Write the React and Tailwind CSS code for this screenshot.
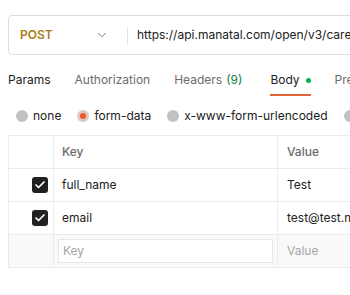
import { ChevronDown, Check } from 'lucide-react';

const tabs = [
  { label: 'Params' },
  { label: 'Authorization' },
  { label: 'Headers', count: '(9)' },
  { label: 'Body', active: true, dot: true },
  { label: 'Pre-request Script' },
];

const bodyTypes = [
  { label: 'none' },
  { label: 'form-data', checked: true },
  { label: 'x-www-form-urlencoded' },
  { label: 'raw' },
];

const rows = [
  { key: 'full_name', value: 'Test' },
  { key: 'email', value: 'test@test.me' },
];

function Radio({ checked }) {
  if (checked) {
    return (
      <span className="flex h-3 w-3 items-center justify-center rounded-full bg-[#dcc9c1]">
        <span className="h-[6px] w-[6px] rounded-full bg-[#eb5b2c]" />
      </span>
    );
  }
  return <span className="h-3 w-3 rounded-full bg-[#c2c2c2]" />;
}

function CheckBox() {
  return (
    <span className="flex h-4 w-4 items-center justify-center rounded-[3px] bg-[#212121]">
      <Check size={12} strokeWidth={3.5} color="#ffffff" />
    </span>
  );
}

export default function App() {
  return (
    <div
      className="h-[295px] w-[350px] overflow-hidden bg-white pl-2 pt-[15px] text-[12px] text-[#212121]"
      style={{ fontFamily: 'Inter, "Noto Sans", sans-serif' }}
    >
      <div className="flex h-10 w-[400px] items-center rounded-[4px] border border-[#dcdcdc]">
        <div className="flex h-full w-[118px] shrink-0 items-center justify-between pl-[11px] pr-[18px]">
          <span className="font-semibold text-[#a67c16]">POST</span>
          <ChevronDown size={14} strokeWidth={1.5} color="#6b6b6b" />
        </div>
        <div className="h-[17px] w-px bg-[#e2e2e2]" />
        <span className="whitespace-nowrap pl-[9px]">https://api.manatal.com/open/v3/career-page</span>
      </div>

      <div className="mt-[10px] flex h-[30px] gap-6 whitespace-nowrap">
        {tabs.map((t) => (
          <div key={t.label} className={`relative flex items-center ${t.count ? 'mr-1' : ''}`}>
            <span className={t.active || t.label === 'Params' ? 'text-[#212121]' : 'text-[#6b6b6b]'}>
              {t.label}
            </span>
            {t.count && <span className="ml-1 text-[#0f7c46]">{t.count}</span>}
            {t.dot && <span className="ml-[6px] h-[5px] w-[5px] rounded-full bg-[#0cb04f]" />}
            {t.active && <span className="absolute bottom-[-1px] left-0 right-0 h-[2px] bg-[#e0653a]" />}
          </div>
        ))}
      </div>

      <div className="mt-[9px] flex h-[24px] items-center gap-4 whitespace-nowrap pl-2">
        {bodyTypes.map((b) => (
          <label key={b.label} className="flex items-center gap-[5px]">
            <Radio checked={b.checked} />
            <span>{b.label}</span>
          </label>
        ))}
      </div>

      <div className="mt-[7px] w-[400px] border-l border-t border-[#ebebeb]">
        <div className="flex h-[33px] border-b border-[#ebebeb]">
          <div className="w-[45px] shrink-0 border-r border-[#ebebeb]" />
          <div className="flex w-[224px] shrink-0 items-center border-r border-[#ebebeb] pl-2 font-medium text-[#6b6b6b]">Key</div>
          <div className="flex flex-1 items-center pl-[9px] font-medium text-[#6b6b6b]">Value</div>
        </div>
        {rows.map((r) => (
          <div key={r.key} className="flex h-[33px] border-b border-[#ebebeb]">
            <div className="flex w-[45px] shrink-0 items-center justify-end border-r border-[#ebebeb] pr-[5px]">
              <CheckBox />
            </div>
            <div className="flex w-[224px] shrink-0 items-center border-r border-[#ebebeb] pl-2">{r.key}</div>
            <div className="flex flex-1 items-center whitespace-nowrap pl-[9px]">{r.value}</div>
          </div>
        ))}
        <div className="flex h-[33px] border-b border-[#ebebeb] bg-[#f9f9f9]">
          <div className="w-[45px] shrink-0 border-r border-[#ebebeb]" />
          <div className="flex w-[224px] shrink-0 items-center border-r border-[#ebebeb] px-1">
            <div className="flex h-[24px] w-full items-center border border-[#e6e6e6] bg-white pl-1 text-[#a6a6a6]">Key</div>
          </div>
          <div className="flex flex-1 items-center pl-[9px] text-[#a6a6a6]">Value</div>
        </div>
      </div>
    </div>
  );
}
